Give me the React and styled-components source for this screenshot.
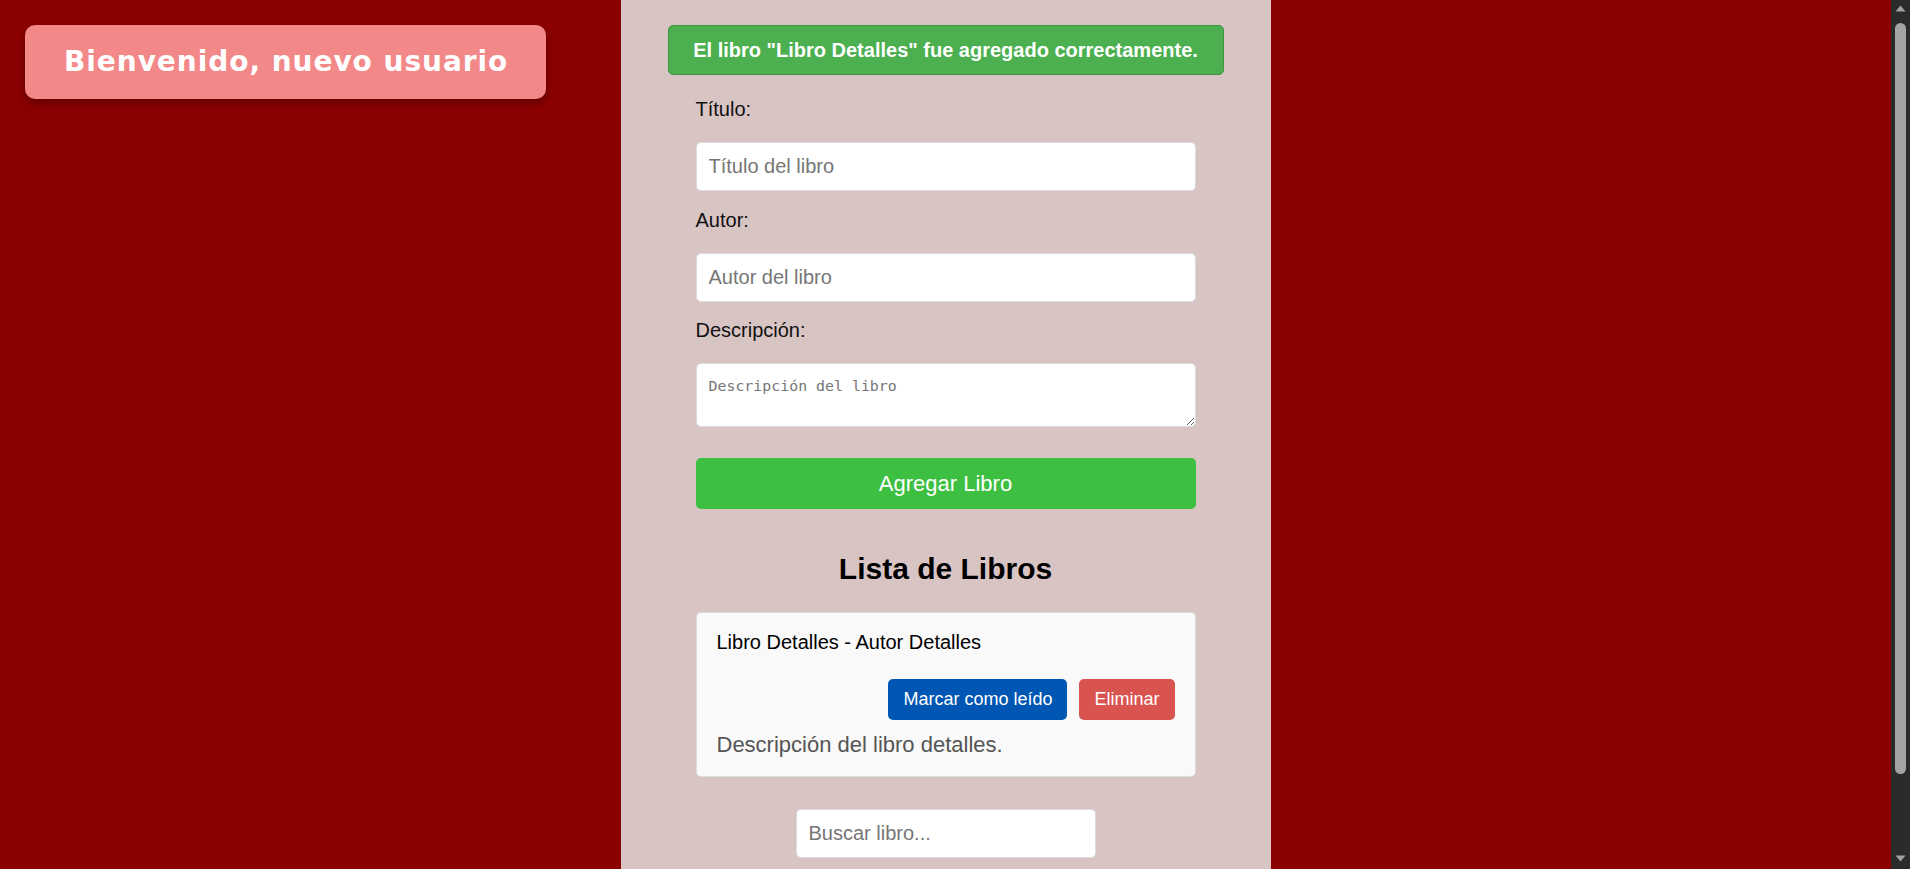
import React from "react";
import styled, { createGlobalStyle } from "styled-components";

const GlobalStyle = createGlobalStyle`
  html, body {
    margin: 0;
    padding: 0;
  }
  body {
    background: #8b0000;
    font-family: "Liberation Sans", Arial, sans-serif;
    color: #111;
  }
  * { box-sizing: border-box; }
`;

const Page = styled.div`
  display: grid;
  grid-template-columns: 1fr 650px 1fr;
  min-height: 966px;
  padding-right: 19px;
`;

const Side = styled.aside`
  display: flex;
  align-items: flex-start;
  padding: 25px;
`;

const Welcome = styled.div`
  background: #f38888;
  color: #fff;
  font-family: "DejaVu Sans", Verdana, sans-serif;
  font-weight: bold;
  font-size: 28px;
  letter-spacing: 0.95px;
  line-height: 34px;
  padding: 20px 38px 20px 39px;
  border-radius: 10px;
  box-shadow: 0 4px 8px rgba(0, 0, 0, 0.3);
  white-space: nowrap;
`;

const Panel = styled.main`
  background: #d9c4c4;
  padding: 25px 0 107px;
  display: flex;
  flex-direction: column;
  align-items: center;
`;

const Notice = styled.div`
  width: 556px;
  background: #4caf50;
  border: 1px solid #3f9443;
  border-radius: 5px;
  color: #fff;
  font-weight: bold;
  font-size: 20px;
  line-height: 24px;
  padding: 12px;
  text-align: center;
`;

const Form = styled.form`
  width: 500px;
  margin-top: 23px;
  display: flex;
  flex-direction: column;
`;

const Label = styled.label`
  font-size: 20px;
  line-height: 23px;
  color: #111;
  margin-bottom: 21px;
`;

const TextInput = styled.input`
  width: ${(p) => p.$width || "100%"};
  height: 49px;
  padding: 0 12px;
  font-family: "Liberation Sans", Arial, sans-serif;
  font-size: 20px;
  border: 1px solid #dcdcdc;
  border-radius: 5px;
  background: #fff;
  margin-bottom: ${(p) => p.$mb || "17.5px"};
  outline: none;
  &::placeholder { color: #767676; }
`;

const TextArea = styled.textarea`
  width: 100%;
  height: 64px;
  padding: 13px 12px;
  font-family: "DejaVu Sans Mono", "Liberation Mono", monospace;
  font-size: 14.9px;
  border: 1px solid #dcdcdc;
  border-radius: 5px;
  background: #fff;
  outline: none;
  &::placeholder { color: #767676; }
`;

const SubmitButton = styled.button`
  margin-top: 31px;
  width: 100%;
  height: 51px;
  border: none;
  border-radius: 5px;
  background: #3dbf42;
  color: #fff;
  font-family: "Liberation Sans", Arial, sans-serif;
  font-size: 22px;
  cursor: pointer;
`;

const ListTitle = styled.h2`
  margin: 43px 0 26px;
  font-size: 30px;
  line-height: 34px;
  font-weight: bold;
  color: #000;
  text-align: center;
`;

const BookCard = styled.div`
  width: 500px;
  background: #f9f9f9;
  border: 1px solid #dddddd;
  border-radius: 5px;
  padding: 18px 20px 19px;
  display: flex;
  flex-direction: column;
`;

const BookTitle = styled.div`
  font-size: 20px;
  line-height: 23px;
  color: #000;
`;

const Actions = styled.div`
  display: flex;
  justify-content: flex-end;
  gap: 12px;
  margin-top: 25px;
`;

const ActionButton = styled.button`
  border: none;
  border-radius: 5px;
  background: ${(p) => (p.$variant === "danger" ? "#d9534f" : "#0056b3")};
  color: #fff;
  font-family: "Liberation Sans", Arial, sans-serif;
  font-size: 18px;
  line-height: 20.7px;
  padding: 10px 15px;
  cursor: pointer;
`;

const BookDescription = styled.p`
  margin: 12px 0 0;
  font-size: 22px;
  line-height: 25px;
  color: #555;
`;

const SearchRow = styled.div`
  margin-top: 32px;
  display: flex;
  justify-content: center;
`;

/* Browser scrollbar of the reference, drawn over the page edge */
const ScrollTrack = styled.div`
  position: fixed;
  top: 0;
  right: 0;
  bottom: 0;
  width: 19px;
  background: #2b2b2b;
  display: flex;
  flex-direction: column;
  align-items: center;
  padding: 5px 0 7px;
`;

const ScrollThumb = styled.div`
  flex: 0 0 751px;
  width: 11px;
  margin: 11px 0 0;
  border-radius: 6px;
  background: #a3a3a3;
`;

const ScrollArrow = styled.svg`
  width: 11px;
  height: 7px;
  display: block;
  margin-top: ${(p) => (p.$down ? "auto" : "0")};
`;

export default function App() {
  return (
    <>
      <GlobalStyle />
      <Page>
        <Side>
          <Welcome>Bienvenido, nuevo usuario</Welcome>
        </Side>
        <Panel>
          <Notice>El libro "Libro Detalles" fue agregado correctamente.</Notice>
          <Form onSubmit={(e) => e.preventDefault()}>
            <Label htmlFor="titulo">Título:</Label>
            <TextInput id="titulo" placeholder="Título del libro" />
            <Label htmlFor="autor">Autor:</Label>
            <TextInput id="autor" placeholder="Autor del libro" />
            <Label htmlFor="descripcion">Descripción:</Label>
            <TextArea id="descripcion" placeholder="Descripción del libro" />
            <SubmitButton type="submit">Agregar Libro</SubmitButton>
          </Form>
          <ListTitle>Lista de Libros</ListTitle>
          <BookCard>
            <BookTitle>Libro Detalles - Autor Detalles</BookTitle>
            <Actions>
              <ActionButton>Marcar como leído</ActionButton>
              <ActionButton $variant="danger">Eliminar</ActionButton>
            </Actions>
            <BookDescription>Descripción del libro detalles.</BookDescription>
          </BookCard>
          <SearchRow>
            <TextInput $width="300px" $mb="0" placeholder="Buscar libro..." />
          </SearchRow>
        </Panel>
        <div />
      </Page>
      <ScrollTrack aria-hidden="true">
        <ScrollArrow viewBox="0 0 11 7">
          <path d="M5.5 0.5 L10.5 6.5 L0.5 6.5 Z" fill="#a3a3a3" />
        </ScrollArrow>
        <ScrollThumb />
        <ScrollArrow $down viewBox="0 0 11 7">
          <path d="M0.5 0.5 L10.5 0.5 L5.5 6.5 Z" fill="#a3a3a3" />
        </ScrollArrow>
      </ScrollTrack>
    </>
  );
}
